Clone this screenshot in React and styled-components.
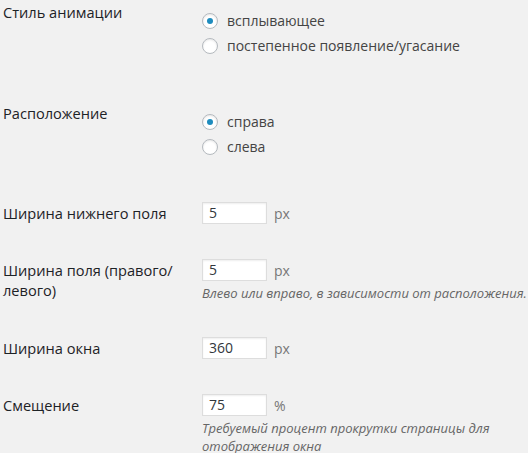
import React from 'react';
import styled, { createGlobalStyle } from 'styled-components';

const GlobalStyle = createGlobalStyle`
  html, body {
    margin: 0;
    padding: 0;
    background: #f1f1f1;
  }
  body {
    font-family: 'Open Sans', 'Liberation Sans', sans-serif;
    font-size: 14px;
    color: #444;
  }
`;

const FormTable = styled.div`
  display: flex;
  flex-direction: column;
  width: 528px;
  overflow: hidden;
`;

const Row = styled.div`
  display: grid;
  grid-template-columns: 202px 1fr;
  padding: 17px 0 18px;

  &:first-child {
    padding-top: 0;
  }
`;

const Label = styled.div`
  padding-left: 3px;
  margin-top: ${p => p.$offset || 0}px;
  font-size: 14.6px;
  font-weight: 400;
  line-height: 19.5px;
  color: #1d2226;
`;

const Content = styled.div`
  min-width: 0;
`;

const RadioGroup = styled.div`
  display: flex;
  flex-direction: column;
  padding: 8px 0 8px;
`;

const RadioLine = styled.label`
  display: flex;
  align-items: center;
  height: 25px;
  font-size: 14px;
  color: #444;
`;

const Radio = styled.span`
  box-sizing: border-box;
  width: 16px;
  height: 16px;
  margin-right: 9px;
  border: 1px solid #b4b9be;
  border-radius: 50%;
  background: #fff;
  box-shadow: inset 0 1px 2px rgba(0, 0, 0, 0.1);
  display: flex;
  align-items: center;
  justify-content: center;

  &::before {
    content: '';
    display: ${p => (p.$checked ? 'block' : 'none')};
    width: 6px;
    height: 6px;
    border-radius: 50%;
    background: #1e8cbe;
  }
`;

const FieldLine = styled.div`
  display: flex;
  align-items: center;
  gap: 7px;
  height: 22px;
`;

const NumberInput = styled.div`
  box-sizing: border-box;
  width: 65px;
  height: 22px;
  padding: 0 6px;
  border: 1px solid #ddd;
  background: #fff;
  box-shadow: inset 0 1px 2px rgba(0, 0, 0, 0.07);
  font-size: 14px;
  line-height: 20px;
  color: #32373c;
`;

const Unit = styled.span`
  font-size: 14px;
  color: #777;
`;

const Description = styled.p`
  margin: 3px 0 0;
  padding-right: 30px;
  font-size: 13px;
  font-style: italic;
  line-height: 18px;
  color: #666;
  white-space: ${p => (p.$nowrap ? 'nowrap' : 'normal')};
`;

const radioRows = [
  {
    label: 'Стиль анимации',
    options: [
      { text: 'всплывающее', checked: true },
      { text: 'постепенное появление/угасание', checked: false },
    ],
  },
  {
    label: 'Расположение',
    options: [
      { text: 'справа', checked: true },
      { text: 'слева', checked: false },
    ],
  },
];

const fieldRows = [
  { label: 'Ширина нижнего поля', value: '5', unit: 'px' },
  {
    label: 'Ширина поля (правого/ левого)',
    value: '5',
    unit: 'px',
    description: 'Влево или вправо, в зависимости от расположения.',
    nowrap: true,
  },
  { label: 'Ширина окна', value: '360', unit: 'px' },
  {
    label: 'Смещение',
    value: '75',
    unit: '%',
    description: 'Требуемый процент прокрутки страницы для отображения окна',
  },
];

export default function App() {
  return (
    <>
      <GlobalStyle />
      <FormTable>
        {radioRows.map(row => (
          <Row key={row.label}>
            <Label $offset={3}>{row.label}</Label>
            <Content>
              <RadioGroup>
                {row.options.map(opt => (
                  <RadioLine key={opt.text}>
                    <Radio $checked={opt.checked} />
                    {opt.text}
                  </RadioLine>
                ))}
              </RadioGroup>
            </Content>
          </Row>
        ))}
        {fieldRows.map(row => (
          <Row key={row.label}>
            <Label $offset={2}>{row.label}</Label>
            <Content>
              <FieldLine>
                <NumberInput>{row.value}</NumberInput>
                <Unit>{row.unit}</Unit>
              </FieldLine>
              {row.description && (
                <Description $nowrap={row.nowrap}>{row.description}</Description>
              )}
            </Content>
          </Row>
        ))}
      </FormTable>
    </>
  );
}
